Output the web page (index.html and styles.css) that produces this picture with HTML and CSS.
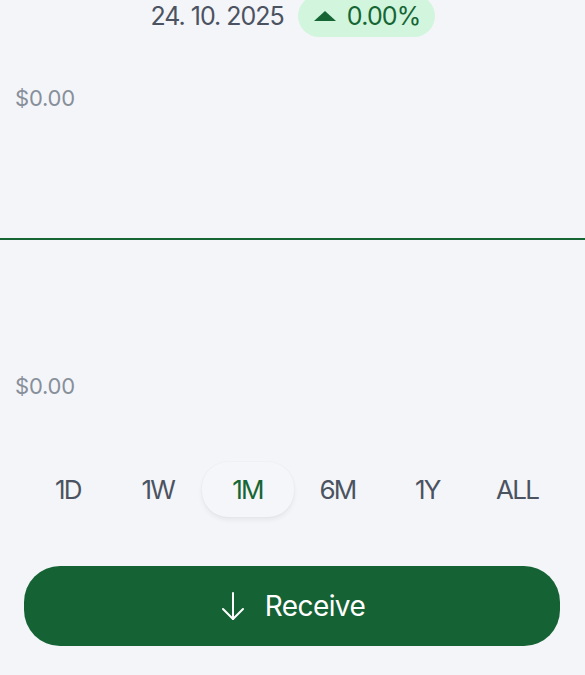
FILE: index.html
```html
<!DOCTYPE html>
<html lang="en">
<head>
    <meta charset="UTF-8">
    <meta name="viewport" content="width=device-width, initial-scale=1.0">
    <title>Wallet</title>
    <link rel="stylesheet" href="styles.css">
</head>
<body>
    <div class="header">
        <span class="date">24. 10. 2025</span>
        <span class="change">
            <svg class="caret" width="22" height="10" viewBox="0 0 22 10"><path d="M11 0 L22 10 L0 10 Z" fill="#166534"/></svg>
            0.00%
        </span>
    </div>

    <div class="chart">
        <div class="axis-label">$0.00</div>
        <div class="line"></div>
        <div class="axis-label">$0.00</div>
    </div>

    <div class="ranges">
        <div class="range">1D</div>
        <div class="range">1W</div>
        <div class="range active">1M</div>
        <div class="range">6M</div>
        <div class="range">1Y</div>
        <div class="range">ALL</div>
    </div>

    <button class="receive">
        <svg width="28" height="30" viewBox="0 0 28 30" fill="none" stroke="#fff" stroke-width="2" stroke-linecap="round" stroke-linejoin="round">
            <path d="M14 2 V28"/>
            <path d="M4 18 L14 28 L24 18"/>
        </svg>
        Receive
    </button>
</body>
</html>
```
FILE: styles.css
```css
body{
    margin: 0;
    background-color: #f4f5f9;
    font-family: Inter, "Noto Sans", sans-serif;
    overflow: hidden;
}

.header{
    display: flex;
    justify-content: center;
    align-items: center;
    gap: 14px;
    margin-top: -5px;
    height: 42px;
}
.date{
    font-size: 25px;
    color: #4b5361;
    letter-spacing: -1px;
}
.change{
    display: flex;
    align-items: center;
    gap: 11px;
    height: 42px;
    padding: 0 14px 0 16px;
    border-radius: 21px;
    background-color: #d1f6dd;
    color: #166534;
    font-size: 25px;
    letter-spacing: -0.8px;
}

.chart{
    padding-top: 49px;
}
.axis-label{
    padding-left: 15px;
    font-size: 22px;
    line-height: 24px;
    color: #878f9a;
    letter-spacing: -0.2px;
}
.line{
    height: 2px;
    background-color: #166534;
    margin: 128px 0 134px;
}

.ranges{
    display: grid;
    grid-template-columns: repeat(6, minmax(0, 1fr));
    margin: 64px 23px 0;
}
.range{
    justify-self: center;
    width: 92px;
    height: 55px;
    display: flex;
    align-items: center;
    justify-content: center;
    font-size: 26px;
    color: #4b5361;
    letter-spacing: -1.8px;
}
.range.active{
    color: #166534;
    background-color: #f5f6fa;
    border-radius: 26px;
    box-shadow: 0 3px 5px rgba(0,0,0,0.06), 0 0 2px rgba(0,0,0,0.05);
}

.receive{
    display: flex;
    align-items: center;
    justify-content: center;
    gap: 18px;
    width: 536px;
    height: 80px;
    margin: 49px 24px 0;
    border: none;
    border-radius: 36px;
    background-color: #156235;
    color: #fff;
    font-family: Inter, "Noto Sans", sans-serif;
    font-size: 28px;
    letter-spacing: -0.6px;
}
```
